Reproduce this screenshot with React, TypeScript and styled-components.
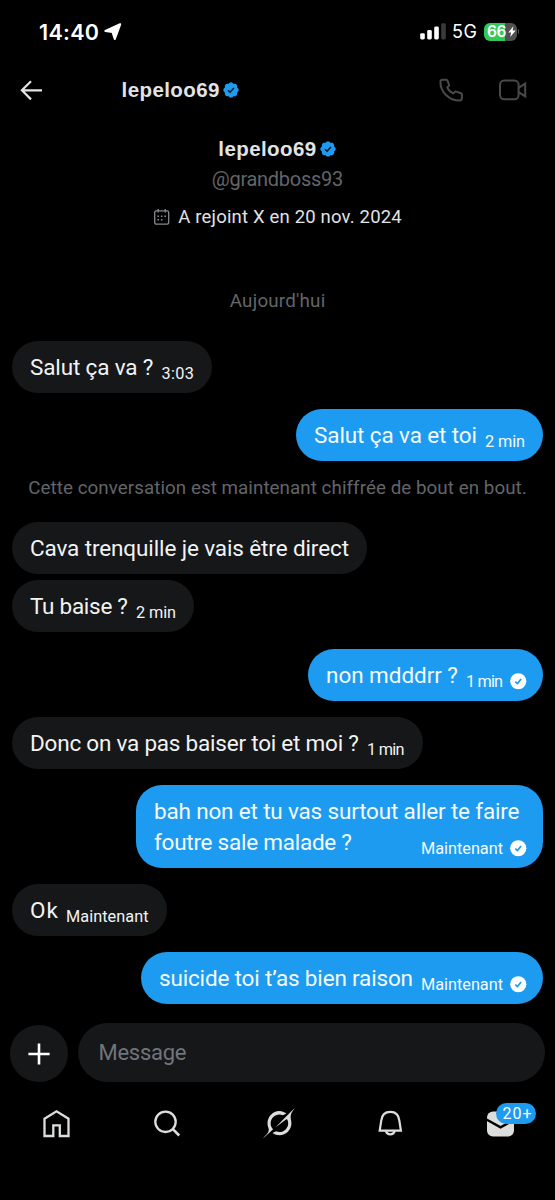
import React, { useLayoutEffect, useRef, useState } from "react";
import styled, { createGlobalStyle } from "styled-components";

const BLUE = "#1d9bf0";
const SURFACE = "#161719";
const INK = "#e2e3e4";
const MUTED = "#62656a";

const GlobalStyle = createGlobalStyle`
  * { box-sizing: border-box; }
  body { margin: 0; background: #000; }
  svg { display: block; flex: none; }
`;

/* Text set to a given measure: the tracking is worked out from its natural width. */
const TextBox = styled.span<{ $w: number }>`
  display: block;
  flex: none;
  width: ${(p) => p.$w}px;
  white-space: nowrap;
`;

function Tracked({ text, w }: { text: string; w: number }) {
  const ref = useRef<HTMLSpanElement>(null);
  const [spacing, setSpacing] = useState(0);
  useLayoutEffect(() => {
    if (ref.current) {
      const natural = ref.current.getBoundingClientRect().width;
      setSpacing((w - natural) / Math.max(1, text.length - 1));
    }
  }, [text, w]);
  return (
    <TextBox $w={w}>
      <span ref={ref} style={{ letterSpacing: spacing }}>
        {text}
      </span>
    </TextBox>
  );
}

const Screen = styled.div`
  width: 555px;
  height: 1200px;
  overflow: hidden;
  display: flex;
  flex-direction: column;
  background: #000;
  color: ${INK};
  font-family: Roboto, "Liberation Sans", sans-serif;
`;

/* Status bar */

const StatusBar = styled.div`
  height: 60px;
  padding: 3px 36px 0 39px;
  display: flex;
  align-items: center;
  color: #fff;
  font-family: Inter, sans-serif;
`;

const Clock = styled.div`
  font-size: 21.5px;
  font-weight: 600;
  line-height: 28px;
  margin-right: 5px;
`;

const StatusRight = styled.div`
  margin-left: auto;
  display: flex;
  align-items: center;
`;

const Network = styled.div`
  font-size: 18px;
  font-weight: 400;
  line-height: 24px;
  margin: 1px 7px 0 6px;
`;

const Battery = styled.div`
  width: 32.5px;
  height: 18px;
  border-radius: 6px;
  padding-left: 3px;
  display: flex;
  align-items: center;
  gap: 1px;
  background: linear-gradient(90deg, #34c759 0 21.5px, #505052 21.5px);
  font-size: 15.5px;
  font-weight: 600;
  line-height: 18px;
`;

const BatteryNub = styled.div`
  width: 1.5px;
  height: 5px;
  margin-left: 1px;
  border-radius: 0 2px 2px 0;
  background: #505052;
`;

/* Conversation header */

const Header = styled.header`
  height: 60px;
  padding: 0 27px 1px 19px;
  display: flex;
  align-items: center;
`;

const NameLine = styled.div`
  display: flex;
  align-items: center;
  gap: 2.5px;
  font-family: "Liberation Sans", Arial, sans-serif;
  font-size: 20.5px;
  font-weight: 700;
  line-height: 24px;
`;

const HeaderName = styled(NameLine)`
  margin-left: 78.5px;
`;

const HeaderActions = styled.div`
  margin-left: auto;
  display: flex;
  align-items: center;
  gap: 34px;
  color: #4a4a4b;
`;

/* Profile summary */

const Profile = styled.section`
  padding-top: 17px;
  display: flex;
  flex-direction: column;
  align-items: center;
  line-height: 24px;
`;

const Handle = styled.div`
  margin-top: 5.5px;
  font-size: 20px;
  color: ${MUTED};
`;

const Joined = styled.div`
  margin-top: 14px;
  display: flex;
  align-items: center;
  gap: 8px;
  font-size: 18.5px;
`;

const Note = styled.div<{ $top: number }>`
  margin-top: ${(p) => p.$top}px;
  display: flex;
  justify-content: center;
  font-size: 18.8px;
  line-height: 24px;
  color: ${MUTED};
`;

/* Messages */

const MessageRow = styled.div<{ $mine?: boolean; $top: number }>`
  margin-top: ${(p) => p.$top}px;
  padding: 0 12px;
  display: flex;
  justify-content: ${(p) => (p.$mine ? "flex-end" : "flex-start")};
`;

const Bubble = styled.div<{ $mine?: boolean; $checked?: boolean; $width?: number }>`
  width: ${(p) => (p.$width ? `${p.$width}px` : "auto")};
  padding: 10.5px ${(p) => (p.$checked ? 16.5 : 18)}px 10.5px 18px;
  border-radius: 26px;
  background: ${(p) => (p.$mine ? BLUE : SURFACE)};
  color: ${(p) => (p.$mine ? "#f4faff" : "#f2f3f4")};
  font-size: 22.5px;
  line-height: 31px;
`;

const LastLine = styled.div`
  display: flex;
  align-items: flex-end;
  justify-content: space-between;
  gap: 8px;
`;

const Meta = styled.div`
  display: flex;
  align-items: center;
  gap: 7px;
  margin-bottom: -1px;
  font-size: 16.3px;
  line-height: 20px;
`;

/* Composer */

const Composer = styled.div`
  margin-top: 19px;
  padding: 0 10px;
  display: flex;
  align-items: flex-end;
  gap: 10px;
`;

const AddButton = styled.div`
  width: 57.5px;
  height: 57px;
  border-radius: 50%;
  display: flex;
  align-items: center;
  justify-content: center;
  background: ${SURFACE};
`;

const Field = styled.div`
  flex: 1;
  height: 59px;
  border-radius: 30px;
  padding: 1px 21px 0;
  display: flex;
  align-items: center;
  background: ${SURFACE};
  color: #71757a;
  font-size: 22px;
  line-height: 30px;
`;

/* Tab bar */

const Tabs = styled.nav`
  height: 82px;
  display: grid;
  grid-template-columns: repeat(5, 111px);
`;

const Tab = styled.div<{ $shift?: number }>`
  position: relative;
  display: flex;
  align-items: center;
  justify-content: center;
  padding-left: ${(p) => p.$shift ?? 0}px;
  color: #dcdddd;
`;

const Count = styled.div`
  position: absolute;
  left: 52px;
  top: 21px;
  width: 40px;
  height: 21px;
  border-radius: 11px;
  padding-left: 6.5px;
  background: ${BLUE};
  color: #fff;
  font-size: 16px;
  line-height: 21px;
`;

const Verified = () => (
  <svg width="18" height="18" viewBox="0 0 22 22">
    <path
      fill={BLUE}
      d="M20.396 11c-.018-.646-.215-1.275-.57-1.816-.354-.54-.852-.972-1.438-1.246.223-.607.27-1.264.14-1.897-.131-.634-.437-1.218-.882-1.687-.47-.445-1.053-.75-1.687-.882-.633-.13-1.29-.083-1.897.14-.273-.587-.704-1.086-1.245-1.44S11.647 1.62 11 1.604c-.646.017-1.273.213-1.813.568s-.969.854-1.24 1.44c-.608-.223-1.267-.272-1.902-.14-.635.13-1.22.436-1.69.882-.445.47-.749 1.055-.878 1.688-.13.633-.08 1.29.144 1.896-.587.274-1.087.705-1.443 1.245-.356.54-.555 1.17-.574 1.817.02.647.218 1.276.574 1.817.356.54.856.972 1.443 1.245-.224.606-.274 1.263-.144 1.896.13.634.433 1.218.877 1.688.47.443 1.054.747 1.687.878.633.132 1.29.084 1.897-.136.274.586.705 1.084 1.246 1.439.54.354 1.17.551 1.816.569.647-.016 1.276-.213 1.817-.567s.972-.854 1.245-1.44c.604.239 1.266.296 1.903.164.636-.132 1.22-.447 1.68-.907.46-.46.776-1.044.908-1.681s.075-1.299-.165-1.903c.586-.274 1.084-.705 1.439-1.246.354-.54.551-1.17.569-1.816z"
    />
    <path d="M7.3 11.4l2.5 2.4 4.8-5.3" fill="none" stroke="#04121d" strokeWidth="1.8" />
  </svg>
);

const SentCheck = () => (
  <svg width="16.5" height="16.5" viewBox="0 0 16.5 16.5">
    <circle cx="8.25" cy="8.25" r="8.1" fill="#fff" />
    <path d="M5.3 8.7l2.1 1.9 3.7-4.6" fill="none" stroke={BLUE} strokeWidth="1.7" />
  </svg>
);

type Message = {
  lines: [string, number][];
  meta?: [string, number];
  mine?: boolean;
  checked?: boolean;
  top: number;
  width?: number;
};

const FIRST: Message[] = [
  { lines: [["Salut ça va ?", 123.5]], meta: ["3:03", 32.5], top: 28 },
  { lines: [["Salut ça va et toi", 163]], meta: ["2 min", 40], mine: true, top: 16 },
];

const ENCRYPTED: Message[] = [
  { lines: [["Cava trenquille je vais être direct", 319]], top: 22 },
  { lines: [["Tu baise ?", 98]], meta: ["2 min", 40], top: 6 },
  { lines: [["non mdddrr ?", 132]], meta: ["1 min", 37], mine: true, checked: true, top: 17 },
  { lines: [["Donc on va pas baiser toi et moi ?", 329]], meta: ["1 min", 37.5], top: 16 },
  {
    lines: [
      ["bah non et tu vas surtout aller te faire", 365.5],
      ["foutre sale malade ?", 198],
    ],
    meta: ["Maintenant", 82],
    mine: true,
    checked: true,
    top: 16,
    width: 407,
  },
  { lines: [["Ok", 28]], meta: ["Maintenant", 82.5], top: 16 },
  {
    lines: [["suicide toi t’as bien raison", 254]],
    meta: ["Maintenant", 82],
    mine: true,
    checked: true,
    top: 16,
  },
];

function MessageItem({ lines, meta, mine, checked, top, width }: Message) {
  const last = lines[lines.length - 1];
  return (
    <MessageRow $mine={mine} $top={top}>
      <Bubble $mine={mine} $checked={checked} $width={width}>
        {lines.slice(0, -1).map(([text, w]) => (
          <Tracked key={text} text={text} w={w} />
        ))}
        <LastLine>
          <Tracked text={last[0]} w={last[1]} />
          {meta && (
            <Meta>
              <Tracked text={meta[0]} w={meta[1]} />
              {checked && <SentCheck />}
            </Meta>
          )}
        </LastLine>
      </Bubble>
    </MessageRow>
  );
}

export default function App() {
  return (
    <Screen>
      <GlobalStyle />
      <StatusBar>
        <Clock>
          <Tracked text="14:40" w={60} />
        </Clock>
        <svg width="18" height="18" viewBox="0 0 18 18">
          <path
            d="M16.1 1.3L1.4 7.9 8.5 9 10.8 15.9z"
            fill="#fff"
            stroke="#fff"
            strokeWidth="2.2"
            strokeLinejoin="round"
          />
        </svg>
        <StatusRight>
          <svg width="26" height="17" viewBox="0 0 26 17">
            <rect x="0.2" y="10.2" width="4.6" height="6.3" rx="1.4" fill="#fff" />
            <rect x="7.2" y="7" width="4.6" height="9.5" rx="1.4" fill="#fff" />
            <rect x="14.2" y="3.6" width="4.6" height="12.9" rx="1.4" fill="#fff" />
            <rect x="21.2" y="0.3" width="4.6" height="16.2" rx="1.4" fill="#3a3a3c" />
          </svg>
          <Network>
            <Tracked text="5G" w={25} />
          </Network>
          <Battery>
            <Tracked text="66" w={19.5} />
            <svg width="8" height="11" viewBox="0 0 8 11">
              <path d="M5.4.3L.3 6.4H3.2L2.2 10.9 7.7 4.5H4.6z" fill="#fff" />
            </svg>
          </Battery>
          <BatteryNub />
        </StatusRight>
      </StatusBar>

      <Header>
        <svg width="24" height="24" viewBox="0 0 24 24" fill="none" stroke={INK} strokeWidth="2.2">
          <path d="M23 12.3H3.4M12 3.2L2.9 12.3 12 21.4" />
        </svg>
        <HeaderName>
          <Tracked text="lepeloo69" w={98} />
          <Verified />
        </HeaderName>
        <HeaderActions>
          <svg width="26" height="26" viewBox="0 0 26 26" fill="none" stroke="currentColor" strokeWidth="2">
            <path
              strokeLinejoin="round"
              d="M4.6 2.8H8.2C8.9 2.8 9.4 3.2 9.6 3.8L11 7.5C11.2 8.1 11 8.7 10.6 9.1L9.2 10.4C10.4 13.1 12.5 15.2 15.3 16.4L16.8 14.9C17.2 14.5 17.8 14.4 18.3 14.6L22.9 16.2C23.5 16.4 23.9 17 23.9 17.6V21.1C23.9 22.5 22.9 23.6 21.5 23.6 11.1 23.6 2.4 15 2.4 5 2.4 3.7 3.3 2.8 4.6 2.8z"
            />
          </svg>
          <svg width="30" height="26" viewBox="0 0 30 26" fill="none" stroke="currentColor" strokeWidth="2">
            <rect x="2" y="3.6" width="18.6" height="18.6" rx="4.2" />
            <path d="M20.6 10.8L27.2 6.6V19.4L20.6 15.2" />
          </svg>
        </HeaderActions>
      </Header>

      <Profile>
        <NameLine>
          <Tracked text="lepeloo69" w={98} />
          <Verified />
        </NameLine>
        <Handle>
          <Tracked text="@grandboss93" w={131.5} />
        </Handle>
        <Joined>
          <svg width="17" height="18" viewBox="0 0 17 18" fill="none" stroke="#85898d" strokeWidth="1.3">
            <rect x="1.7" y="2.8" width="14" height="13.4" rx="1.6" />
            <path d="M5.1 1V4.4M12.3 1V4.4" />
            <path
              d="M7.9 8.2h1.6M11.4 8.2h1.6M4.4 8.2h1.6M4.4 11.8h1.6M7.9 11.8h1.6"
              strokeWidth="1.6"
            />
          </svg>
          <Tracked text="A rejoint X en 20 nov. 2024" w={223.5} />
        </Joined>
      </Profile>

      <Note $top={60.5}>
        <Tracked text="Aujourd'hui" w={95.5} />
      </Note>
      {FIRST.map((m) => (
        <MessageItem key={m.lines[0][0]} {...m} />
      ))}
      <Note $top={15}>
        <Tracked text="Cette conversation est maintenant chiffrée de bout en bout." w={498.5} />
      </Note>
      {ENCRYPTED.map((m) => (
        <MessageItem key={m.lines[0][0]} {...m} />
      ))}

      <Composer>
        <AddButton>
          <svg width="24" height="24" viewBox="0 0 24 24" stroke="#fff" strokeWidth="2.6">
            <path d="M12 1.4V22.6M1.4 12H22.6" />
          </svg>
        </AddButton>
        <Field>
          <Tracked text="Message" w={88} />
        </Field>
      </Composer>

      <Tabs>
        <Tab>
          <svg width="36" height="36" viewBox="0 0 36 36" fill="none" stroke="currentColor" strokeWidth="2.3">
            <path d="M6.5 13.7L18.5 6.3 30.5 13.7V31H21.8V20.4H15.3V31H6.5z" />
          </svg>
        </Tab>
        <Tab>
          <svg width="36" height="36" viewBox="0 0 36 36" fill="none" stroke="currentColor" strokeWidth="2.3">
            <circle cx="16.5" cy="16.8" r="10.2" />
            <path d="M23.6 23.9L30.2 30.5" strokeWidth="2.6" />
          </svg>
        </Tab>
        <Tab $shift={2}>
          <svg width="32" height="32" viewBox="0 0 24 24" fill="currentColor">
            <path d="M9.27 15.29l7.978-5.897c.391-.29.95-.177 1.137.272.98 2.369.542 5.215-1.41 7.169-1.951 1.954-4.667 2.382-7.149 1.406l-2.711 1.257c3.889 2.661 8.611 2.003 11.562-.953 2.341-2.344 3.066-5.539 2.388-8.42l.006.007c-.983-4.232.242-5.924 2.75-9.383.06-.082.12-.164.179-.248l-3.301 3.305v-.01L9.267 15.292M7.623 16.723c-2.792-2.67-2.31-6.801.071-9.184 1.761-1.763 4.647-2.483 7.166-1.425l2.705-1.25a7.808 7.808 0 00-1.829-1A8.975 8.975 0 005.984 5.83c-2.533 2.536-3.33 6.436-1.962 9.764 1.022 2.487-.653 4.246-2.34 6.022-.599.63-1.199 1.259-1.682 1.925l7.62-6.815" />
          </svg>
        </Tab>
        <Tab $shift={3}>
          <svg width="36" height="36" viewBox="0 0 36 36" fill="none" stroke="currentColor" strokeWidth="2.2">
            <path d="M7.7 25.6L9.2 15.8C9.8 10.2 13.3 6.9 18.3 6.9S26.8 10.2 27.4 15.8L28.9 25.6z" />
            <path d="M13.9 26.2a4.6 4.5 0 0 0 8.8 0" />
          </svg>
        </Tab>
        <Tab $shift={1}>
          <svg width="36" height="36" viewBox="0 0 36 36">
            <rect x="5" y="6.5" width="27" height="25" rx="6" fill="currentColor" />
            <path d="M4 14.3L18.6 22.3 33 14.3" fill="none" stroke="#000" strokeWidth="2.4" />
          </svg>
          <Count>
            <Tracked text="20+" w={29} />
          </Count>
        </Tab>
      </Tabs>
    </Screen>
  );
}
